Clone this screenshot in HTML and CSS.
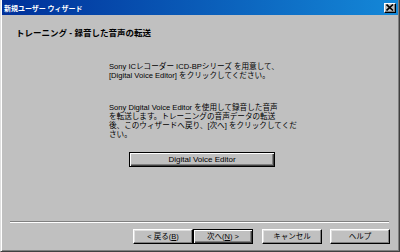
FILE: index.html
```html
<!DOCTYPE html>
<html lang="ja">
<head>
<meta charset="utf-8">
<link rel="stylesheet" href="styles.css">
</head>
<body>
<div class="window">
  <div class="titlebar">
    <span class="title">新規ユーザー ウィザード</span>
    <span class="close"><svg width="8" height="7" viewBox="0 0 8 7"><path d="M0.5 0.5 L7 6.5 M7 0.5 L0.5 6.5" stroke="#000" stroke-width="1.6"/></svg></span>
  </div>
  <div class="main">
    <div class="heading">トレーニング - 録音した音声の転送</div>
    <div class="content">
      <p class="para para1">Sony ICレコーダー ICD-BPシリーズ を用意して、<br>[Digital Voice Editor] をクリックしてください。</p>
      <p class="para para2">Sony Digital Voice Editor を使用して録音した音声<br>を転送します。トレーニングの音声データの転送<br>後、このウィザードへ戻り、[次へ] をクリックしてくだ<br>さい。</p>
      <div class="btn btn-default btn-wide">Digital Voice Editor</div>
    </div>
  </div>
  <div class="footer">
    <div class="separator"></div>
    <div class="buttons">
      <div class="btn">&lt; 戻る(<u>B</u>)</div>
      <div class="btn btn-default">次へ(<u>N</u>) &gt;</div>
      <div class="btn btn-cancel">キャンセル</div>
      <div class="btn btn-help">ヘルプ</div>
    </div>
  </div>
</div>
</body>
</html>
```

FILE: styles.css
```css
html, body {
  margin: 0;
  padding: 0;
}
body {
  width: 400px;
  height: 252px;
  overflow: hidden;
  background: #c0c0c0;
  font-family: "Liberation Sans", "Noto Sans CJK JP", sans-serif;
  color: #000;
}
.window {
  box-sizing: border-box;
  width: 400px;
  height: 252px;
  background: #c0c0c0;
  border-left: 1px solid #dfdfdf;
  border-right: 1px solid #404040;
  border-bottom: 1px solid #404040;
  box-shadow: inset 1px 0 #fff, inset -1px -1px #808080;
  padding: 0 1px 1px 1px;
  display: flex;
  flex-direction: column;
}
.titlebar {
  height: 15px;
  background: linear-gradient(90deg, #00309a 0%, #0a5cb8 50%, #1488d8 100%);
  display: flex;
  align-items: center;
  justify-content: space-between;
  padding: 0 2px 0 2px;
}
.title {
  color: #fff;
  font-family: "Noto Sans CJK JP", sans-serif;
  font-weight: bold;
  font-size: 7px;
  line-height: 10px;
}
.close {
  box-sizing: border-box;
  width: 12px;
  height: 10px;
  background: #c0c0c0;
  border-top: 1px solid #fff;
  border-left: 1px solid #fff;
  border-right: 1px solid #000;
  border-bottom: 1px solid #000;
  box-shadow: inset -1px -1px #808080;
  display: flex;
  align-items: center;
  justify-content: center;
}
.close svg {
  display: block;
}
.main {
  flex: 1;
  display: flex;
  flex-direction: column;
}
.heading {
  margin: 13px 0 0 14px;
  font-weight: bold;
  font-size: 8.5px;
  line-height: 10px;
  white-space: nowrap;
}
.content {
  margin-left: 107px;
  display: flex;
  flex-direction: column;
  align-items: flex-start;
}
.para {
  margin: 0;
  font-size: 7.6px;
  line-height: 9px;
  white-space: nowrap;
}
.para1 {
  margin-top: 24px;
}
.para2 {
  margin-top: 23px;
}
.btn {
  box-sizing: border-box;
  width: 60px;
  height: 15px;
  border-top: 1px solid #fff;
  border-left: 1px solid #fff;
  border-right: 1px solid #000;
  border-bottom: 1px solid #000;
  box-shadow: inset -1px -1px #808080, inset 1px 1px #dfdfdf;
  display: flex;
  align-items: center;
  justify-content: center;
  font-size: 7.5px;
  line-height: 9px;
  white-space: nowrap;
}
.btn u {
  text-underline-offset: 1px;
}
.btn-default {
  border: 1px solid #000;
  box-shadow: inset 1px 1px #fff, inset -1px -1px #404040, inset -2px -2px #808080;
}
.btn-wide {
  width: 146px;
  margin: 13px 0 0 20px;
  font-size: 8px;
}
.footer {
  display: flex;
  flex-direction: column;
  padding-bottom: 6px;
}
.separator {
  height: 0;
  border-top: 1px solid #808080;
  border-bottom: 1px solid #fff;
  margin: 0 9px 0 8px;
}
.buttons {
  display: flex;
  justify-content: flex-end;
  margin-top: 6px;
  padding-right: 8px;
}
.btn-cancel {
  margin-left: 9px;
}
.btn-help {
  margin-left: 8px;
}
```
